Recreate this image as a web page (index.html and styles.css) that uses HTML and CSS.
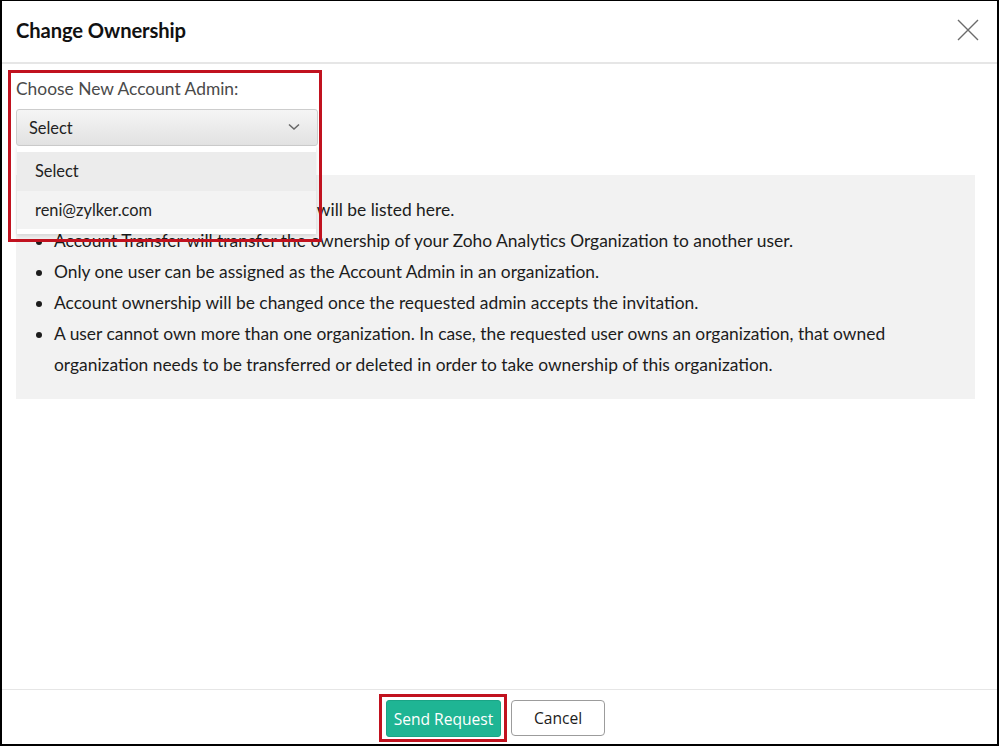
FILE: index.html
```html
<!DOCTYPE html>
<html lang="en">
<head>
<meta charset="utf-8">
<title>Change Ownership</title>
<link rel="stylesheet" href="styles.css">
</head>
<body>
<div class="dialog">
  <header class="dlg-header">
    <h1 class="dlg-title">Change Ownership</h1>
    <button class="dlg-close" aria-label="Close">
      <svg width="22" height="22" viewBox="0 0 22 22"><path d="M1 1 L21 21 M21 1 L1 21" stroke="#6b6b6b" stroke-width="1.4" fill="none"/></svg>
    </button>
  </header>
  <main class="dlg-body">
    <div class="field">
      <label class="field-label">Choose New Account Admin:</label>
      <div class="select-wrap">
        <div class="select">
          <span>Select</span>
          <svg class="chev" width="12" height="8" viewBox="0 0 12 8"><path d="M1 1.5 L6 6 L11 1.5" stroke="#666" stroke-width="1.5" fill="none"/></svg>
        </div>
        <ul class="dropdown">
          <li class="opt opt-active">Select</li>
          <li class="opt">reni@zylker.com</li>
        </ul>
      </div>
    </div>
    <div class="info">
      <ul class="info-list">
        <li>Only your organization's members will be listed here.</li>
        <li>Account Transfer will transfer the ownership of your Zoho Analytics Organization to another user.</li>
        <li>Only one user can be assigned as the Account Admin in an organization.</li>
        <li>Account ownership will be changed once the requested admin accepts the invitation.</li>
        <li>A user cannot own more than one organization. In case, the requested user owns an organization, that owned organization needs to be transferred or deleted in order to take ownership of this organization.</li>
      </ul>
    </div>
    <div class="highlight-box"></div>
  </main>
  <footer class="dlg-footer">
    <span class="highlight-btn"><button class="btn btn-primary">Send Request</button></span>
    <button class="btn btn-secondary">Cancel</button>
  </footer>
</div>
</body>
</html>
```
FILE: styles.css
```css
* { box-sizing: border-box; }
html, body { margin: 0; padding: 0; }
body {
  width: 999px;
  height: 746px;
  background: #fff;
  font-family: Lato, "Open Sans", sans-serif;
  overflow: hidden;
}
.dialog {
  width: 999px;
  height: 746px;
  border: 2px solid #000;
  border-top-width: 1px;
  display: flex;
  flex-direction: column;
  background: #fff;
}
.dlg-header {
  height: 63px;
  flex: 0 0 63px;
  border-bottom: 2px solid #e6e6e6;
  display: flex;
  align-items: center;
  justify-content: space-between;
  padding: 0 18px 4px 14px;
}
.dlg-title {
  margin: 0;
  font-size: 20.2px;
  font-weight: 700;
  color: #111;
  letter-spacing: -0.1px;
}
.dlg-close {
  border: 0;
  background: none;
  padding: 0;
  width: 22px;
  height: 22px;
  margin-top: 0;
  cursor: pointer;
}
.dlg-body {
  flex: 1;
  position: relative;
  padding: 15px 22px 0 14px;
}
.field-label {
  display: block;
  font-size: 17.4px;
  line-height: 20px;
  color: #4a4a4a;
}
.select-wrap {
  position: relative;
  width: 302px;
  margin-top: 10px;
  z-index: 2;
}
.select {
  height: 37px;
  border: 1px solid #cdcdcd;
  border-radius: 3px;
  background: linear-gradient(#f5f5f5, #e2e2e2);
  display: flex;
  align-items: center;
  justify-content: space-between;
  padding: 0 17px 0 12px;
  font-size: 16.4px;
  color: #222;
}
.chev { margin-top: -2px; }
.dropdown {
  position: absolute;
  top: 37px;
  left: 1px;
  width: 299px;
  margin: 0;
  padding: 6px 0 5px;
  list-style: none;
  background: #fff;
  box-shadow: 0 2px 4px rgba(0,0,0,0.12);
}
.opt {
  height: 38px;
  line-height: 37px;
  padding-left: 18px;
  font-size: 16.4px;
  color: #222;
  background: #f3f3f3;
}
.opt-active { background: #ececec; height: 39px; line-height: 38px; }
.info {
  margin-top: 29px;
  background: #f2f2f2;
  padding: 19px 20px 19px 0;
}
.info-list {
  margin: 0;
  padding-left: 38px;
  font-size: 17.4px;
  line-height: 31px;
  color: #1c1c1c;
}
.highlight-box {
  position: absolute;
  left: 6px;
  top: 6px;
  width: 314px;
  height: 172px;
  border: 3px solid #c1121f;
  pointer-events: none;
  z-index: 3;
}
.dlg-footer {
  flex: 0 0 55px;
  border-top: 1px solid #e6e6e6;
  display: flex;
  justify-content: center;
  align-items: flex-start;
  gap: 4px;
  padding: 4px 15px 0 0;
}
.highlight-btn {
  display: block;
  border: 3px solid #c1121f;
  padding: 3px 3px 2px 4px;
}
.btn {
  display: block;
  font-family: "Open Sans", "Noto Sans", sans-serif;
  font-size: 15.6px;
  height: 37px;
  border-radius: 3px;
  cursor: pointer;
}
.btn-primary {
  width: 115px;
  background: #1fb594;
  color: #fff;
  border: 1px solid #1aa586;
}
.btn-secondary {
  width: 94px;
  height: 36px;
  margin-top: 6px;
  background: #fff;
  color: #1c1c1c;
  border: 1px solid #9c9c9c;
  border-radius: 4px;
}
```
